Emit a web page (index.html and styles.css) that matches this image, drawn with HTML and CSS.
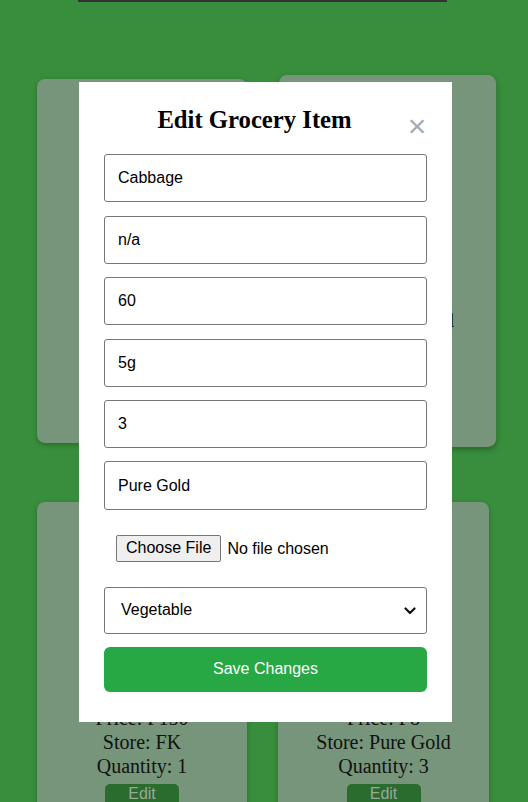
FILE: index.html
```html
<!DOCTYPE html>
<html lang="en">
<head>
<meta charset="utf-8">
<title>Grocery List</title>
<link rel="stylesheet" href="styles.css">
</head>
<body>
  <div class="topbar"></div>
  <main class="grid">
    <div class="card">
      <h3 class="card-name">Tomato</h3>
      <div class="thumb"></div>
      <p class="line">Price: ₱40</p>
      <p class="line">Store: FK</p>
      <p class="line">Quantity: 2</p>
      <button class="edit">Edit</button>
    </div>
    <div class="card hovered">
      <h3 class="card-name">Cabbage</h3>
      <div class="thumb"></div>
      <p class="line">Price: ₱60</p>
      <p class="line">Store: Pure Gold</p>
      <p class="line">Quantity: 3</p>
      <button class="edit">Edit</button>
    </div>
    <div class="card">
      <h3 class="card-name">Rice</h3>
      <div class="thumb"></div>
      <p class="line">Price: ₱150</p>
      <p class="line">Store: FK</p>
      <p class="line">Quantity: 1</p>
      <button class="edit">Edit</button>
    </div>
    <div class="card">
      <h3 class="card-name">Egg</h3>
      <div class="thumb"></div>
      <p class="line">Price: ₱8</p>
      <p class="line">Store: Pure Gold</p>
      <p class="line">Quantity: 3</p>
      <button class="edit">Edit</button>
    </div>
  </main>

  <div class="overlay">
    <div class="modal">
      <div class="modal-head">
        <h2 class="modal-title">Edit Grocery Item</h2>
        <span class="close">&times;</span>
      </div>
      <form class="form">
        <input class="field" type="text" value="Cabbage">
        <input class="field" type="text" value="n/a">
        <input class="field" type="text" value="60">
        <input class="field" type="text" value="5g">
        <input class="field" type="text" value="3">
        <input class="field" type="text" value="Pure Gold">
        <input class="field file" type="file">
        <div class="select-wrap">
          <select class="field select">
            <option>Vegetable</option>
            <option>Fruit</option>
            <option>Meat</option>
          </select>
          <svg class="chevron" width="12" height="8" viewBox="0 0 12 8" aria-hidden="true">
            <path d="M1.5 1.5 L6 6 L10.5 1.5" fill="none" stroke="#111" stroke-width="2.2" stroke-linecap="round" stroke-linejoin="round"/>
          </svg>
        </div>
        <button class="save" type="button">Save Changes</button>
      </form>
    </div>
  </div>
</body>
</html>
```
FILE: styles.css
```css
html, body {
  margin: 0;
  padding: 0;
}

body {
  background: #388e3c;
  font-family: "Liberation Serif", "DejaVu Serif", serif;
  height: 802px;
  overflow: hidden;
}

.topbar {
  height: 2px;
  width: 369px;
  margin-left: 78px;
  background: #333333;
}

.grid {
  display: grid;
  grid-template-columns: 210px 211px;
  grid-auto-rows: 364px;
  column-gap: 31px;
  row-gap: 59px;
  padding: 77px 0 0 37px;
}

.card {
  background: #76957a;
  border-radius: 8px;
  box-shadow: 0 2px 5px rgba(0, 0, 0, 0.25);
  padding: 16px;
  text-align: center;
  box-sizing: border-box;
  display: flex;
  flex-direction: column;
  align-items: center;
}

.card.hovered {
  transform: translateX(4px) scale(1.03, 1.022);
}

.card-name {
  margin: 0 0 10px;
  font-size: 20px;
  line-height: 24px;
  color: #111;
}

.thumb {
  height: 154px;
}

.line {
  margin: 0;
  font-size: 20px;
  line-height: 24px;
  color: #111;
}

.hovered .line {
  padding-right: 5px;
}

.edit {
  margin-top: 6px;
  width: 74px;
  height: 26px;
  border: none;
  border-radius: 5px;
  background: #2a6b2e;
  color: #9aa89b;
  font-family: "Liberation Sans", Arial, sans-serif;
  font-size: 16px;
  line-height: 18px;
  padding: 0 0 6px;
}

.overlay {
  position: fixed;
  inset: 0;
  display: flex;
  align-items: center;
  justify-content: center;
  padding: 2px 0 0 3px;
}

.modal {
  width: 373px;
  box-sizing: border-box;
  background: #ffffff;
  padding: 20px 25px 20px;
}

.modal-head {
  display: flex;
  align-items: flex-start;
}

.modal-title {
  flex: 1;
  margin: 4px 0 20px;
  text-align: center;
  font-family: "Liberation Serif", serif;
  font-weight: bold;
  font-size: 24.7px;
  line-height: 28px;
  color: #000;
}

.close {
  width: 20px;
  margin: 8px 0 0 2px;
  text-align: center;
  font-family: "Liberation Sans", Arial, sans-serif;
  font-size: 32px;
  line-height: 32px;
  color: #aaaaaa;
}

.form {
  display: flex;
  flex-direction: column;
}

.field {
  display: block;
  box-sizing: border-box;
  width: 100%;
  height: 48.4px;
  margin: 0 0 13.1px;
  padding: 14px 13px;
  border: 1px solid #767676;
  border-radius: 3px;
  background: #fff;
  font-family: "Liberation Sans", Arial, sans-serif;
  font-size: 16px;
  line-height: 18.4px;
  color: #000;
}

.file {
  height: 51px;
  margin-bottom: 13px;
  border: none;
  padding: 12px;
}

.file::file-selector-button {
  font-family: "Liberation Sans", Arial, sans-serif;
  font-size: 16px;
  height: 27px;
  padding: 3px 9px;
  margin-right: 6px;
  border: 1px solid #767676;
  border-radius: 2px;
  background: #efefef;
  color: #000;
}

.select-wrap {
  position: relative;
  margin-bottom: 13px;
}

.select {
  -webkit-appearance: none;
  appearance: none;
  height: 47px;
  margin: 0;
  padding: 12px 30px 12px 16px;
}

.chevron {
  position: absolute;
  right: 11px;
  top: 20px;
  pointer-events: none;
}

.save {
  height: 45px;
  margin: 0 0 10px;
  border: none;
  border-radius: 6px;
  background: #28a745;
  color: #fff;
  font-family: "Liberation Sans", Arial, sans-serif;
  font-size: 16px;
}
```
